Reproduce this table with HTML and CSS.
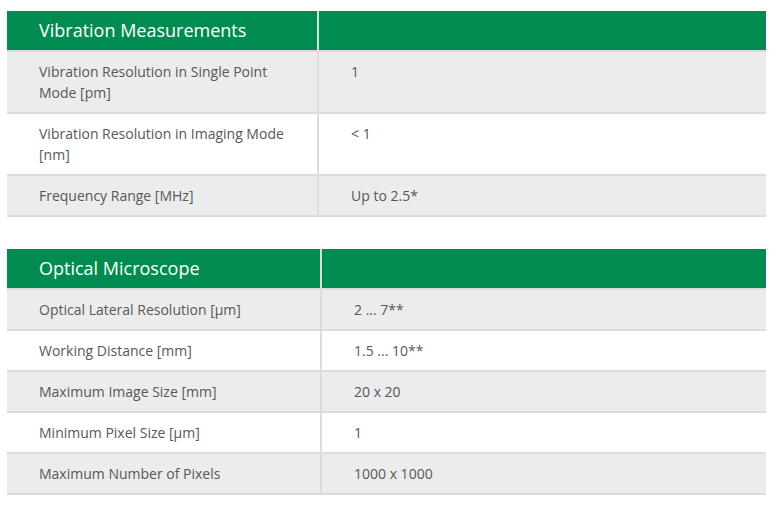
FILE: index.html
```html
<!DOCTYPE html>
<html>
<head>
<meta charset="utf-8">
<link rel="stylesheet" href="styles.css">
</head>
<body>
<div class="page">
  <div class="spec spec-a">
    <div class="cell head">Vibration Measurements</div>
    <div class="cell head"></div>
    <div class="cell odd">Vibration Resolution in Single Point Mode [pm]</div>
    <div class="cell odd">1</div>
    <div class="cell even">Vibration Resolution in Imaging Mode [nm]</div>
    <div class="cell even">&lt; 1</div>
    <div class="cell odd">Frequency Range [MHz]</div>
    <div class="cell odd">Up to 2.5*</div>
  </div>
  <div class="spec spec-b">
    <div class="cell head">Optical Microscope</div>
    <div class="cell head"></div>
    <div class="cell odd">Optical Lateral Resolution [µm]</div>
    <div class="cell odd">2 ... 7**</div>
    <div class="cell even">Working Distance [mm]</div>
    <div class="cell even">1.5 ... 10**</div>
    <div class="cell odd">Maximum Image Size [mm]</div>
    <div class="cell odd">20 x 20</div>
    <div class="cell even">Minimum Pixel Size [µm]</div>
    <div class="cell even">1</div>
    <div class="cell odd">Maximum Number of Pixels</div>
    <div class="cell odd">1000 x 1000</div>
  </div>
</div>
</body>
</html>
```
FILE: styles.css
```css
html, body {
  margin: 0;
  padding: 0;
  background: #ffffff;
}
.page {
  padding: 11px 16px 0 7px;
  display: flex;
  flex-direction: column;
  gap: 32px;
  font-family: "Open Sans", "Liberation Sans", sans-serif;
}
.spec {
  display: grid;
  column-gap: 2px;
  row-gap: 2px;
  background: #dcdcdc;
  padding-bottom: 2px;
}
.spec-a {
  grid-template-columns: 310px 1fr;
}
.spec-b {
  grid-template-columns: 313px 1fr;
}
.cell {
  padding: 9px 20px 9px 32px;
  font-size: 14px;
  line-height: 21px;
  color: #575757;
}
.head {
  background: #008c50;
  color: #ffffff;
  font-size: 18px;
}
.odd {
  background: #ececec;
}
.even {
  background: #ffffff;
}
```
